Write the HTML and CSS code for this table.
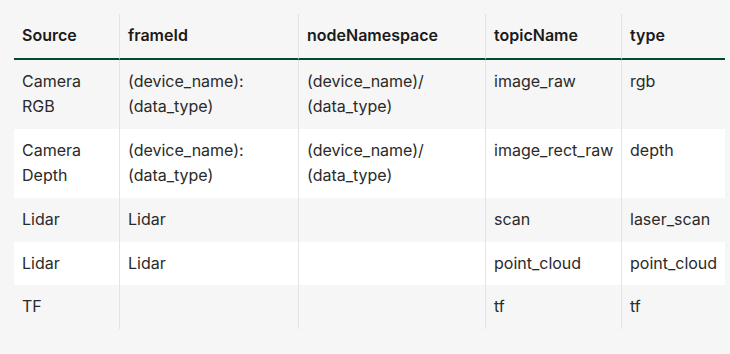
FILE: index.html
```html
<!DOCTYPE html>
<html>
<head>
<meta charset="utf-8">
<link rel="stylesheet" href="styles.css">
</head>
<body>
<table class="data-table">
  <colgroup>
    <col class="c1"><col class="c2"><col class="c3"><col class="c4"><col class="c5">
  </colgroup>
  <thead>
    <tr><th>Source</th><th>frameId</th><th>nodeNamespace</th><th>topicName</th><th>type</th></tr>
  </thead>
  <tbody>
    <tr><td>Camera RGB</td><td>(device_name):<br>(data_type)</td><td>(device_name)/<br>(data_type)</td><td>image_raw</td><td>rgb</td></tr>
    <tr><td>Camera Depth</td><td>(device_name):<br>(data_type)</td><td>(device_name)/<br>(data_type)</td><td>image_rect_raw</td><td>depth</td></tr>
    <tr><td>Lidar</td><td>Lidar</td><td></td><td>scan</td><td>laser_scan</td></tr>
    <tr><td>Lidar</td><td>Lidar</td><td></td><td>point_cloud</td><td>point_cloud</td></tr>
    <tr><td>TF</td><td></td><td></td><td>tf</td><td>tf</td></tr>
  </tbody>
</table>
</body>
</html>
```
FILE: styles.css
```css
html, body {
  margin: 0;
  background: #f6f6f6;
}
body {
  padding: 14px;
  font-family: Inter, "Noto Sans", sans-serif;
  font-size: 16px;
  color: #1a1a1a;
}
.data-table {
  border-collapse: separate;
  border-spacing: 0;
  table-layout: fixed;
  width: 711px;
}
.c1 { width: 105px; }
.c2 { width: 179px; }
.c3 { width: 187px; }
.c4 { width: 136px; }
.c5 { width: 104px; }
.data-table th,
.data-table td {
  text-align: left;
  vertical-align: top;
  padding: 9px 8px;
  line-height: 1.6;
  border-left: 1px solid #e3e3e3;
}
.data-table th:first-child,
.data-table td:first-child {
  border-left: none;
}
.data-table th {
  font-weight: 600;
  border-bottom: 2px solid #004b30;
  color: #1a1a1a;
}
.data-table td {
  color: #2a2a2a;
}
.data-table tbody tr:nth-child(even) td {
  background: #ffffff;
}
```
